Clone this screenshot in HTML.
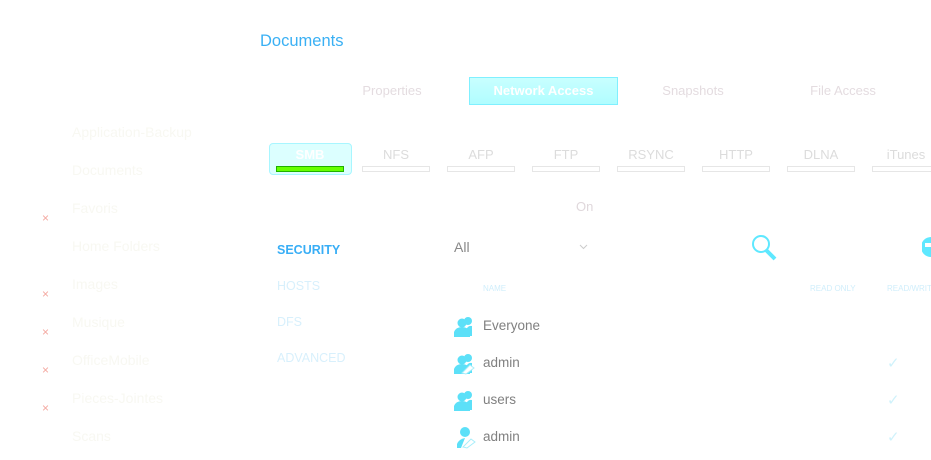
<!DOCTYPE html>
<html><head><meta charset="utf-8"><style>
body{margin:0;width:931px;height:460px;background:#fff;position:relative;overflow:hidden;font-family:"Liberation Sans",sans-serif}
.a{position:absolute;white-space:nowrap}
.side{left:72px;font-size:14px;color:#f8f8f2}
.x{left:42px;font-size:12px;color:#f4a8a0}
.tab{font-size:13px;color:#e4dce0;transform:translateX(-50%)}
.pl{font-size:13px;color:#dcdcdc;transform:translateX(-50%);top:147px}
.pb{top:166px;width:66px;height:4px;border:1px solid #e6e6e6}
.sm{left:277px;font-size:12.5px;color:#d8f0fc}
.row{left:483px;font-size:13.5px;color:#808080}
.chk{left:887px;font-size:15px;color:#d0f2fb}
</style></head><body>
<div class="a" style="left:643px;top:-8px;font-size:10px;color:#e0f8ff">Home</div>
<div class="a" style="left:260px;top:32px;font-size:16.5px;color:#3ab0f4">Documents</div>

<div class="a tab" style="left:392px;top:83px">Properties</div>
<div class="a" style="left:469px;top:77px;width:147px;height:26px;background:linear-gradient(#c8ffff,#b0fdff);border:1px solid #80f0ff;color:#fff;font-weight:bold;font-size:13px;text-align:center;line-height:26px">Network Access</div>
<div class="a tab" style="left:693px;top:83px">Snapshots</div>
<div class="a tab" style="left:843px;top:83px">File Access</div>

<div class="a side" style="top:124px">Application-Backup</div>
<div class="a side" style="top:162px">Documents</div>
<div class="a side" style="top:200px">Favoris</div>
<div class="a side" style="top:238px">Home Folders</div>
<div class="a side" style="top:276px">Images</div>
<div class="a side" style="top:314px">Musique</div>
<div class="a side" style="top:352px">OfficeMobile</div>
<div class="a side" style="top:390px">Pieces-Jointes</div>
<div class="a side" style="top:428px">Scans</div>
<div class="a x" style="top:211px">×</div>
<div class="a x" style="top:287px">×</div>
<div class="a x" style="top:325px">×</div>
<div class="a x" style="top:363px">×</div>
<div class="a x" style="top:401px">×</div>

<div class="a" style="left:269px;top:143px;width:81px;height:30px;background:#dcffff;border:1px solid #a8f6ff;border-radius:4px"></div>
<div class="a" style="left:310px;top:147px;transform:translateX(-50%);color:#fff;font-weight:bold;font-size:13px">SMB</div>
<div class="a" style="left:276px;top:166px;width:66px;height:4px;background:#66ff00;border:1px solid #20b000"></div>
<div class="a pl" style="left:396px">NFS</div><div class="a pb" style="left:362px"></div>
<div class="a pl" style="left:481px">AFP</div><div class="a pb" style="left:447px"></div>
<div class="a pl" style="left:566px">FTP</div><div class="a pb" style="left:532px"></div>
<div class="a pl" style="left:651px">RSYNC</div><div class="a pb" style="left:617px"></div>
<div class="a pl" style="left:736px">HTTP</div><div class="a pb" style="left:702px"></div>
<div class="a pl" style="left:821px">DLNA</div><div class="a pb" style="left:787px"></div>
<div class="a pl" style="left:906px">iTunes</div><div class="a pb" style="left:872px"></div>

<div class="a" style="left:576px;top:199px;font-size:13px;color:#e0d8dc">On</div>

<div class="a sm" style="top:243px;color:#38aef6;font-weight:bold">SECURITY</div>
<div class="a sm" style="top:279px">HOSTS</div>
<div class="a sm" style="top:315px">DFS</div>
<div class="a sm" style="top:351px">ADVANCED</div>

<div class="a" style="left:454px;top:239px;font-size:14px;color:#888">All</div>
<svg class="a" style="left:579px;top:244px" width="9" height="6"><path d="M1 1l3.5 3.5L8 1" fill="none" stroke="#ccc"/></svg>
<svg class="a" style="left:750px;top:233px" width="30" height="30"><circle cx="11" cy="11" r="8" fill="none" stroke="#5ee8ff" stroke-width="2"/><path d="M16 17l9 9" stroke="#5ee8ff" stroke-width="4"/></svg>
<svg class="a" style="left:922px;top:237px" width="9" height="26"><path d="M9 0A10 10 0 0 0 9 20Z M3 6h6v4H3z" fill="#5ee8ff"/></svg>

<div class="a" style="left:483px;top:284px;font-size:8px;color:#d0eefb">NAME</div>
<div class="a" style="left:810px;top:284px;font-size:8px;color:#d0eefb">READ ONLY</div>
<div class="a" style="left:887px;top:284px;font-size:8px;color:#d0eefb">READ/WRITE</div>

<svg width="0" height="0" style="position:absolute"><defs>
<g id="grp"><circle cx="14" cy="6" r="4" fill="#5ce0f8"/><path d="M12 21v-6q2-5 6 -4v10z" fill="#5ce0f8"/><circle cx="8" cy="8" r="4.5" fill="#5ce0f8"/><path d="M0 22v-5q2-5 8-5q6 0 8 5v5z" fill="#5ce0f8"/></g>
<g id="usr"><circle cx="10" cy="6" r="5" fill="#5ce0f8"/><path d="M2 22v-4q2-5 8-6l-4 10z" fill="#5ce0f8"/><path d="M8 21l8-8 4 3-8 6z" fill="none" stroke="#a8eefa" stroke-width="1"/></g>
</defs></svg>
<svg class="a" style="left:454px;top:315px" width="22" height="23"><use href="#grp"/></svg>
<svg class="a" style="left:454px;top:352px" width="22" height="23"><use href="#grp"/><path d="M8 21l8-8 4 3-8 6z" fill="#fff" stroke="#a8eefa"/></svg>
<svg class="a" style="left:454px;top:389px" width="22" height="23"><use href="#grp"/></svg>
<svg class="a" style="left:455px;top:426px" width="22" height="23"><use href="#usr"/></svg>

<div class="a row" style="top:318px">Everyone</div>
<div class="a row" style="top:355px">admin</div>
<div class="a row" style="top:392px">users</div>
<div class="a row" style="top:429px">admin</div>
<div class="a chk" style="top:354px">✓</div>
<div class="a chk" style="top:391px">✓</div>
<div class="a chk" style="top:428px">✓</div>
</body></html>
